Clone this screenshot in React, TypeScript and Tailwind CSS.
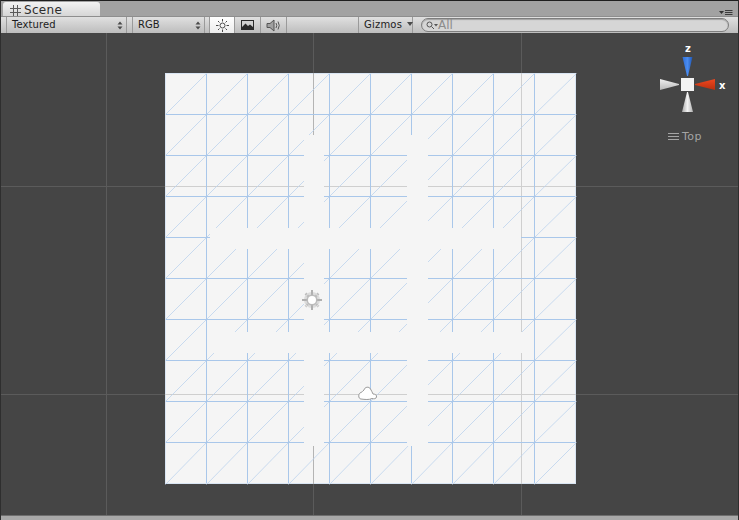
const font = { fontFamily: '"DejaVu Sans", sans-serif' };

const cells = Array.from({ length: 10 }, (_, i) => i);
const px = (i: number) => Math.floor(165 + 41.1 * i) + 0.5;
const py = (j: number) => Math.floor(73 + 41.1 * j) + 0.5;

function UpDownArrows() {
  return (
    <svg width="6" height="9" viewBox="0 0 6 9" className="shrink-0">
      <path d="M3 0.5 L5.5 3.5 H0.5 Z M3 8.5 L5.5 5.5 H0.5 Z" fill="#4a4a4a" />
    </svg>
  );
}

function SceneView() {
  return (
    <svg width="739" height="482" viewBox="0 33 739 482" className="block">
      <rect x="0" y="33" width="739" height="482" fill="#454545" />
      {/* world grid on the dark background */}
      <g stroke="#5b5b5b">
        <line x1="106.5" y1="33" x2="106.5" y2="515" />
        <line x1="313.5" y1="33" x2="313.5" y2="515" />
        <line x1="521.5" y1="33" x2="521.5" y2="515" />
        <line x1="0" y1="186.5" x2="739" y2="186.5" />
        <line x1="0" y1="394.5" x2="739" y2="394.5" />
      </g>
      {/* plane */}
      <rect x="165" y="73" width="411" height="411" fill="#f5f5f5" />
      <rect x="165.5" y="73.5" width="410" height="410" fill="none" stroke="#d9e5f3" />
      <g stroke="#cfcfcf">
        <line x1="165" y1="186.5" x2="576" y2="186.5" />
        <line x1="165" y1="394.5" x2="576" y2="394.5" />
        <line x1="521.5" y1="73" x2="521.5" y2="484" />
        <line x1="313.5" y1="73" x2="313.5" y2="484" stroke="#b4b4b4" />
      </g>
      <g stroke="#bcd3ee" strokeWidth="0.8">
        {cells.flatMap((i) =>
          cells.map((j) => <line key={`${i}-${j}`} x1={px(i)} y1={py(j + 1)} x2={px(i + 1)} y2={py(j)} />),
        )}
      </g>
      <g stroke="#a9c7ea" strokeWidth="1">
        {cells.slice(1).map((i) => (
          <line key={i} x1={px(i)} y1="74" x2={px(i)} y2="483" />
        ))}
        {cells.slice(1).map((j) => (
          <line key={j} x1="166" y1={py(j)} x2="575" y2={py(j)} />
        ))}
      </g>
      {/* cleared strips on the plane */}
      <g fill="#f5f5f5">
        <rect x="210" y="228" width="311" height="21" />
        <rect x="210" y="332" width="312" height="21" />
        <rect x="304" y="135" width="20" height="311" />
        <rect x="407" y="135" width="21" height="311" />
      </g>
      {/* directional light */}
      <g>
        <circle cx="312" cy="300" r="8" fill="#dcdcdc" />
        <path d="M312 290 V310 M302 300 H322" stroke="#b0b0b0" strokeWidth="2" />
        <path d="M305.5 293.5 L318.5 306.5 M318.5 293.5 L305.5 306.5" stroke="#bdbdbd" strokeWidth="2.5" strokeDasharray="1.5 1" />
        <circle cx="312" cy="300" r="5.5" fill="#bcbcbc" />
        <circle cx="312" cy="300" r="4" fill="#ffffff" />
      </g>
      {/* cloud */}
      <path
        d="M361 399 C358 399 358 393 361 392.5 C362 392 363 391 364 390 C364.5 387 369 386 370.5 389 C371.5 391 372.5 392.5 373 394 C375 394 377 395 376.5 397 C376 399 374 399 372 398.5 C369 400 365 399.5 361 399 Z"
        fill="#ffffff"
        stroke="#9a9a9a"
        strokeWidth="1"
      />
      {/* orientation gizmo */}
      <defs>
        <linearGradient id="gz-blue" x1="0" y1="0" x2="1" y2="0">
          <stop offset="0" stopColor="#2f6fd8" />
          <stop offset="0.5" stopColor="#4a8cf0" />
          <stop offset="1" stopColor="#1f55b0" />
        </linearGradient>
        <linearGradient id="gz-red" x1="0" y1="0" x2="0" y2="1">
          <stop offset="0" stopColor="#f0471f" />
          <stop offset="1" stopColor="#b8300f" />
        </linearGradient>
        <linearGradient id="gz-white-h" x1="0" y1="0" x2="0" y2="1">
          <stop offset="0" stopColor="#f0f0f0" />
          <stop offset="1" stopColor="#b8b8b8" />
        </linearGradient>
        <linearGradient id="gz-white-v" x1="0" y1="0" x2="1" y2="0">
          <stop offset="0" stopColor="#a8a8a8" />
          <stop offset="0.5" stopColor="#f2f2f2" />
          <stop offset="1" stopColor="#b0b0b0" />
        </linearGradient>
      </defs>
      <path d="M682.5 57 H692.5 L688 76 H687 Z" fill="url(#gz-blue)" />
      <path d="M687 92 H688 L693 112 H682 Z" fill="url(#gz-white-v)" />
      <path d="M660 79 L679 84 V85 L660 90 Z" fill="url(#gz-white-h)" />
      <path d="M715 79 V90 L695 85 V84 Z" fill="url(#gz-red)" />
      <rect x="681" y="78" width="13" height="13" fill="#f2f2f2" />
    </svg>
  );
}

export default function App() {
  return (
    <div className="relative flex h-[520px] w-[739px] flex-col overflow-hidden bg-[#a2a2a2]" style={font}>
      {/* tab strip */}
      <div className="relative h-[16px] shrink-0 border-t border-[#1e1e1e] pl-[3px] pt-[1px]">
        <div className="flex h-[14px] w-[97px] items-center gap-[3px] rounded-t-[3px] bg-gradient-to-b from-[#f2f2f2] to-[#d6d6d6] pl-[7px] pt-[2px] text-[12px] leading-none tracking-[0.3px] text-[#2c2c2c]">
          <svg width="11" height="11" viewBox="0 0 11 11" className="shrink-0">
            <path d="M3.5 0 V11 M7.5 0 V11 M0 3.5 H11 M0 7.5 H11" stroke="#5a5a5a" strokeWidth="1" />
          </svg>
          Scene
        </div>
        <div className="absolute right-[6px] top-[9px]">
          <svg width="14" height="6" viewBox="0 0 14 6" className="block">
            <path d="M0 1 H5 L2.5 4 Z" fill="#333333" />
            <path d="M6 0.5 H13.5 M6 2.5 H13.5 M6 4.5 H13.5" stroke="#3c3c3c" strokeWidth="1" />
          </svg>
        </div>
      </div>

      {/* toolbar */}
      <div className="flex h-[17px] shrink-0 items-stretch border-t border-[#8e8e8e] bg-gradient-to-b from-[#e0e0e0] to-[#bdbdbd] pl-[6px] pr-[10px] text-[10px] leading-none text-[#1c1c1c]">
        <div className="flex w-[121px] items-center justify-between border-x border-[#9a9a9a] pl-[5px] pr-[3px] tracking-[0.1px]">
          Textured
          <UpDownArrows />
        </div>
        <div className="ml-[5px] flex w-[73px] items-center justify-between border-x border-[#9a9a9a] pl-[5px] pr-[3px]">
          RGB
          <UpDownArrows />
        </div>
        <div className="ml-[4px] flex w-[26px] items-center justify-center border-x border-[#9a9a9a] bg-gradient-to-b from-[#ffffff] to-[#ececec]">
          <svg width="13" height="13" viewBox="0 0 13 13">
            <circle cx="6.5" cy="6.5" r="2.5" fill="none" stroke="#4a4a4a" strokeWidth="1" />
            <path
              d="M6.5 0 V2.5 M6.5 10.5 V13 M0 6.5 H2.5 M10.5 6.5 H13 M2 2 L3.5 3.5 M11 2 L9.5 3.5 M2 11 L3.5 9.5 M11 11 L9.5 9.5"
              stroke="#4a4a4a"
              strokeWidth="1"
            />
          </svg>
        </div>
        <div className="flex w-[26px] items-center justify-center border-r border-[#9a9a9a]">
          <svg width="13" height="10" viewBox="0 0 13 10">
            <rect x="0" y="0" width="13" height="10" fill="#2a2a2a" />
            <rect x="1" y="1" width="11" height="8" fill="#d0d0d0" />
            <path d="M1 7 L4.5 3.5 L7 6 L9 4.5 L12 7 V9 H1 Z" fill="#2a2a2a" />
          </svg>
        </div>
        <div className="flex w-[26px] items-center justify-center border-r border-[#9a9a9a]">
          <svg width="15" height="13" viewBox="0 0 15 13">
            <path d="M1 4.5 H4 L8 1 V12 L4 8.5 H1 Z" fill="#a0a0a0" stroke="#555555" strokeWidth="1" />
            <path d="M10 4 Q11.5 6.5 10 9 M12 2.5 Q14.5 6.5 12 10.5" fill="none" stroke="#555555" strokeWidth="1" />
          </svg>
        </div>
        <div className="ml-[71px] flex w-[55px] items-center gap-[5px] border-x border-[#9a9a9a] pl-[5px] tracking-[0.2px]">
          Gizmos
          <svg width="6" height="4" viewBox="0 0 6 4" className="mb-[2px] shrink-0">
            <path d="M0 0 H6 L3 4 Z" fill="#4a4a4a" />
          </svg>
        </div>
        <div className="ml-[8px] flex flex-1 items-center">
          <div className="flex h-[14px] w-full items-center rounded-full border border-[#7e7e7e] bg-[#d6d6d6] pl-[4px] text-[12px] text-[#8c8c8c] shadow-[inset_0_1px_1px_rgba(0,0,0,0.25)]">
            <svg width="12" height="9" viewBox="0 0 12 9" className="shrink-0">
              <circle cx="3.5" cy="3.5" r="2.5" fill="none" stroke="#555555" strokeWidth="1" />
              <path d="M5.5 5.5 L8 8" stroke="#555555" strokeWidth="1" />
              <path d="M8 3 H12 L10 5.5 Z" fill="#555555" />
            </svg>
            All
          </div>
        </div>
      </div>

      {/* scene view */}
      <div className="relative h-[482px] shrink-0">
        <SceneView />
        <span className="absolute left-[685px] top-[11px] text-[10px] font-bold leading-none text-white">z</span>
        <span className="absolute left-[719px] top-[48px] text-[10px] font-bold leading-none text-white">x</span>
        <div className="absolute left-[668px] top-[98px] flex items-center gap-[3px] text-[11px] leading-none tracking-[0.5px] text-[#a4a4a4]">
          <svg width="11" height="8" viewBox="0 0 11 8">
            <path d="M0 0.5 H11 M0 3.5 H11 M0 6.5 H11" stroke="#a4a4a4" strokeWidth="1" />
          </svg>
          Top
        </div>
      </div>

      {/* bottom edge */}
      <div className="h-[5px] shrink-0 border-t border-[#6e6e6e] bg-[#a8a8a8]" />
      <div className="pointer-events-none absolute inset-y-0 left-0 w-[1px] bg-[#2e2e2e]" />
      <div className="pointer-events-none absolute inset-y-0 right-0 w-[1px] bg-[#2e2e2e]" />
    </div>
  );
}
